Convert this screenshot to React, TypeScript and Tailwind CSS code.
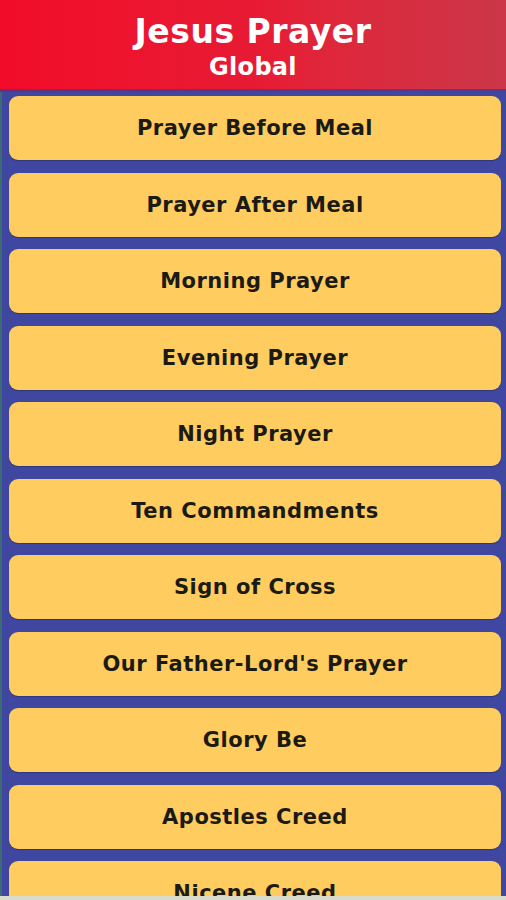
import React from "react";

const items = [
  "Prayer Before Meal",
  "Prayer After Meal",
  "Morning Prayer",
  "Evening Prayer",
  "Night Prayer",
  "Ten Commandments",
  "Sign of Cross",
  "Our Father-Lord's Prayer",
  "Glory Be",
  "Apostles Creed",
  "Nicene Creed",
  "Hail Mary",
];

export default function App() {
  return (
    <div
      className="relative h-[900px] w-[506px] overflow-hidden flex flex-col bg-[#3f47a0]"
      style={{ fontFamily: "'DejaVu Sans', Lato, sans-serif" }}
    >
      <header className="h-[89px] shrink-0 flex flex-col items-center bg-gradient-to-r from-[#f20c2a] via-[#e81a33] to-[#cb3648] text-white">
        <div className="mt-[13px] text-[33px] leading-[38px] font-bold tracking-[0.5px]">Jesus Prayer</div>
        <div className="mt-[2px] text-[24px] leading-[28px] font-bold tracking-[0.3px]">Global</div>
      </header>
      <div className="h-[3px] shrink-0 bg-gradient-to-r from-[#6b2f7a] to-[#5a3a8e]" />
      <main className="flex-1 border-l-[2px] border-[#3c6b72] pl-[7px] pr-[5px] pt-[4px] flex flex-col gap-[12.5px]">
        {items.map((t) => (
          <div
            key={t}
            className="h-[64px] shrink-0 rounded-[9px] bg-[#ffcd5f] pt-[2px] flex items-center justify-center text-[21px] font-bold text-[#1c1a14] tracking-[0.5px] shadow-[0_1px_1px_rgba(0,0,0,0.25)]"
          >
            {t}
          </div>
        ))}
      </main>
      <div className="absolute left-0 right-0 bottom-0 h-[4px] bg-[#d9dccd]" />
    </div>
  );
}
